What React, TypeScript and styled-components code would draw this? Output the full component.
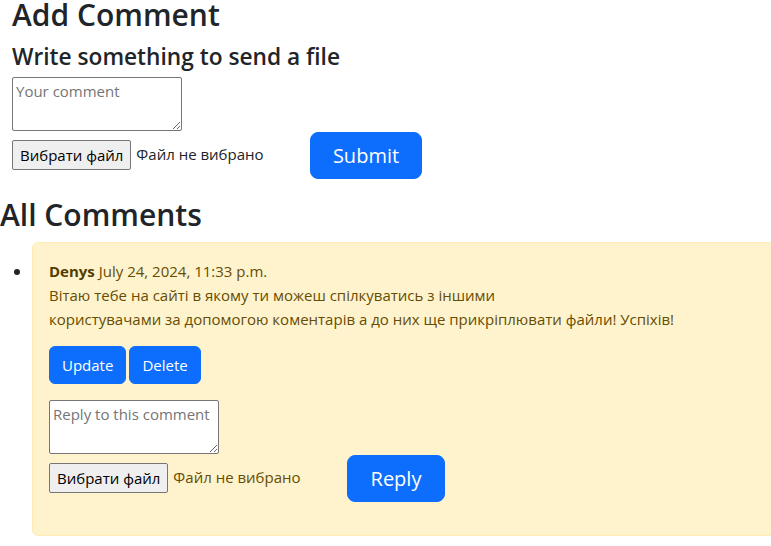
import React from 'react';
import styled, { createGlobalStyle } from 'styled-components';

const COLORS = {
  TEXT: '#212529',
  PRIMARY: '#0d6efd',
  WARNING_BG: '#fff3cd',
  WARNING_BORDER: '#ffecb5',
  WARNING_TEXT: '#664d03',
  WARNING_LINK: '#523e02'
};

const GlobalStyle = createGlobalStyle`
  body {
    margin: 0;
    font-family: "Open Sans", "Noto Sans", sans-serif;
    font-size: 16px;
    line-height: 1.5;
    color: ${COLORS.TEXT};
    background: #fff;
    overflow: hidden;
  }
`;

const FormSection = styled.section`
  padding: 0 12px;
`;

const Title = styled.h1`
  margin: 0 0 13px;
  font-size: 30px;
  font-weight: 600;
  line-height: 30px;
`;

const Subtitle = styled.h4`
  margin: 0 0 7px;
  font-size: 22.7px;
  font-weight: 600;
  line-height: 1.2;
`;

const SectionTitle = styled.h2`
  margin: 18px 0 9px;
  font-size: 30px;
  font-weight: 600;
  line-height: 36px;
`;

const TextArea = styled.textarea`
  display: block;
  box-sizing: border-box;
  width: 170px;
  height: 54px;
  margin: 0 0 1px;
  padding: 4px 3px 2px;
  border: 1px solid #767676;
  border-radius: 2px;
  font-family: "Open Sans", sans-serif;
  font-size: 15px;
  line-height: 1.3;
  background: #fff;
  resize: vertical;

  &::placeholder {
    color: #757575;
  }
`;

const FileRow = styled.div`
  display: flex;
  align-items: center;
`;

const FileField = styled.div`
  display: flex;
  align-items: center;
  width: 298px;
  margin-top: -2px;
`;

const FileButton = styled.button`
  box-sizing: border-box;
  height: 30px;
  padding: 0 7px;
  border: 1px solid #767676;
  border-radius: 2px;
  background: #efefef;
  color: #000;
  font-family: "Open Sans", sans-serif;
  font-size: 15px;
`;

const FileStatus = styled.span`
  margin-left: 5px;
  font-size: 15px;
`;

const Button = styled.button<{ $large?: boolean; $minWidth?: number }>`
  box-sizing: border-box;
  border: 1px solid ${COLORS.PRIMARY};
  background: ${COLORS.PRIMARY};
  color: #fff;
  font-family: "Open Sans", sans-serif;
  font-size: ${(p) => (p.$large ? '20px' : '15px')};
  line-height: ${(p) => (p.$large ? '30px' : '24px')};
  padding: ${(p) => (p.$large ? '7.5px 16px' : '6px 12px')};
  border-radius: ${(p) => (p.$large ? '8px' : '6px')};
  min-width: ${(p) => (p.$minWidth ? `${p.$minWidth}px` : 'auto')};
`;

const CommentList = styled.ul`
  margin: 0;
  padding-left: 32px;
`;

const CommentItem = styled.li`
  &::marker {
    font-size: 16px;
  }
`;

const Alert = styled.div`
  box-sizing: border-box;
  width: 760px;
  padding: 16px 16px 17px;
  border: 1px solid ${COLORS.WARNING_BORDER};
  border-radius: 6px;
  background: ${COLORS.WARNING_BG};
  color: ${COLORS.WARNING_TEXT};
  font-size: 15px;
`;

const Meta = styled.div`
  line-height: 24px;

  strong {
    color: ${COLORS.WARNING_LINK};
    font-weight: 700;
  }
`;

const Body = styled.p`
  margin: 0 0 15px;
  line-height: 24px;
`;

const Actions = styled.div`
  display: flex;
  gap: 3px;
  margin-bottom: 16px;
`;

const ReplyForm = styled.form`
  margin: 0 0 16px;
`;

const App: React.FC = () => {
  return (
    <>
      <GlobalStyle />
      <FormSection>
        <Title>Add Comment</Title>
        <Subtitle>Write something to send a file</Subtitle>
        <TextArea placeholder="Your comment" />
        <FileRow>
          <FileField>
            <FileButton type="button">Вибрати файл</FileButton>
            <FileStatus>Файл не вибрано</FileStatus>
          </FileField>
          <Button $large $minWidth={112} type="button">
            Submit
          </Button>
        </FileRow>
      </FormSection>

      <SectionTitle>All Comments</SectionTitle>
      <CommentList>
        <CommentItem>
          <Alert>
            <Meta>
              <strong>Denys</strong> July 24, 2024, 11:33 p.m.
            </Meta>
            <Body>
              Вітаю тебе на сайті в якому ти можеш спілкуватись з іншими
              <br />
              користувачами за допомогою коментарів а до них ще прикріплювати файли! Успіхів!
            </Body>
            <Actions>
              <Button type="button">Update</Button>
              <Button type="button">Delete</Button>
            </Actions>
            <ReplyForm>
              <TextArea placeholder="Reply to this comment" />
              <FileRow>
                <FileField>
                  <FileButton type="button">Вибрати файл</FileButton>
                  <FileStatus>Файл не вибрано</FileStatus>
                </FileField>
                <Button $large $minWidth={98} type="button">
                  Reply
                </Button>
              </FileRow>
            </ReplyForm>
          </Alert>
        </CommentItem>
      </CommentList>
    </>
  );
};

export default App;
